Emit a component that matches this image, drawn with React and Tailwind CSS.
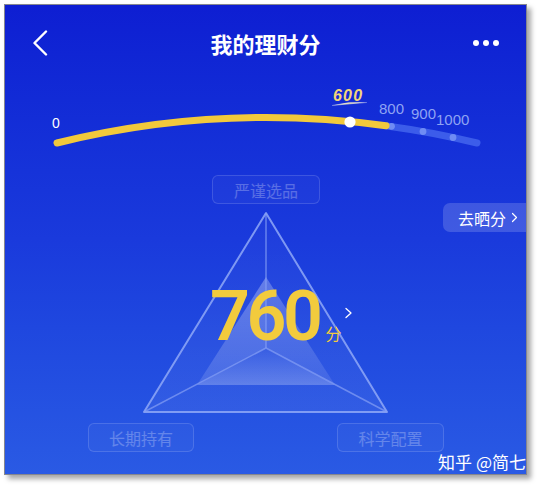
import React from "react";

const CJK = "font-['Noto_Sans_CJK_SC','Noto_Sans',sans-serif]";
const LATIN = "font-['Liberation_Sans',sans-serif]";

function Tag({ label, className = "" }) {
  return (
    <div
      className={`h-[29px] shrink-0 rounded-[6px] border border-white/[0.14] bg-white/[0.03] flex items-center justify-center text-[16px] leading-none text-white/[0.26] ${CJK} ${className}`}
    >
      {label}
    </div>
  );
}

function Gauge() {
  return (
    <section className="relative h-[89px] shrink-0">
      <svg
        className="absolute left-0 top-0"
        width="521"
        height="89"
        viewBox="0 76 521 89"
      >
        <defs>
          <linearGradient id="swoosh" x1="326" y1="0" x2="362" y2="0" gradientUnits="userSpaceOnUse">
            <stop offset="0" stopColor="#ffffff" stopOpacity="0.2" />
            <stop offset="0.5" stopColor="#e9e2c0" />
            <stop offset="1" stopColor="#ffffff" stopOpacity="0.2" />
          </linearGradient>
        </defs>
        {/* remaining range of the scale */}
        <path
          d="M382 121 A877 877 0 0 1 472 138"
          stroke="#4a6cf0"
          strokeOpacity="0.75"
          strokeWidth="7"
          fill="none"
          strokeLinecap="round"
        />
        <circle cx="386.5" cy="121.3" r="3.4" fill="#6f8cf4" />
        <circle cx="418" cy="126.5" r="3.4" fill="#6f8cf4" />
        <circle cx="448" cy="132.5" r="3.4" fill="#6f8cf4" />
        {/* reached part of the scale */}
        <path
          d="M52 138 A877 877 0 0 1 381 120.8"
          stroke="#f2c93b"
          strokeWidth="7"
          fill="none"
          strokeLinecap="round"
        />
        <circle cx="345" cy="117" r="5.6" fill="#ffffff" />
        {/* flourish under the current mark */}
        <path
          d="M327 100.5 Q344 96.5 362 97.5 Q344 98.6 327 100.5 Z"
          fill="url(#swoosh)"
          stroke="url(#swoosh)"
          strokeWidth="0.8"
        />
      </svg>

      {/* scale labels */}
      <span className={`absolute left-[47px] top-[35px] text-[14px] leading-none text-white ${LATIN}`}>
        0
      </span>
      <span className={`absolute left-[328px] top-[7px] text-[16px] leading-none tracking-[1.2px] italic font-bold text-[#f3d67a] ${LATIN}`}>
        600
      </span>
      <span className={`absolute left-[374px] top-[20px] text-[15px] leading-none text-[#8fa3f3] ${LATIN}`}>
        800
      </span>
      <span className={`absolute left-[406px] top-[25px] text-[15px] leading-none text-[#8fa3f3] ${LATIN}`}>
        900
      </span>
      <span className={`absolute left-[431px] top-[31px] text-[15px] leading-none text-[#8fa3f3] ${LATIN}`}>
        1000
      </span>
    </section>
  );
}

function Pyramid() {
  return (
    <div className="relative h-[219px] shrink-0">
      <svg
        className="absolute left-0 top-0"
        width="521"
        height="219"
        viewBox="0 199 521 219"
      >
        <defs>
          <linearGradient id="outerFill" x1="0" y1="208" x2="0" y2="407" gradientUnits="userSpaceOnUse">
            <stop offset="0" stopColor="#ffffff" stopOpacity="0.02" />
            <stop offset="1" stopColor="#ffffff" stopOpacity="0.06" />
          </linearGradient>
          <linearGradient id="faceLeft" x1="0" y1="272" x2="0" y2="380" gradientUnits="userSpaceOnUse">
            <stop offset="0" stopColor="#ffffff" stopOpacity="0.3" />
            <stop offset="1" stopColor="#ffffff" stopOpacity="0.12" />
          </linearGradient>
          <linearGradient id="faceRight" x1="0" y1="272" x2="0" y2="380" gradientUnits="userSpaceOnUse">
            <stop offset="0" stopColor="#ffffff" stopOpacity="0.26" />
            <stop offset="1" stopColor="#ffffff" stopOpacity="0.09" />
          </linearGradient>
          <linearGradient id="faceBottom" x1="0" y1="343" x2="0" y2="380" gradientUnits="userSpaceOnUse">
            <stop offset="0" stopColor="#ffffff" stopOpacity="0.06" />
            <stop offset="1" stopColor="#ffffff" stopOpacity="0.24" />
          </linearGradient>
        </defs>
        <polygon
          points="261,208 139,407 382,407"
          fill="url(#outerFill)"
          stroke="#8fa8f7"
          strokeOpacity="0.85"
          strokeWidth="2"
          strokeLinejoin="round"
        />
        <polygon points="261,272 261,343 192,380" fill="url(#faceLeft)" />
        <polygon points="261,272 330,380 261,343" fill="url(#faceRight)" />
        <polygon points="192,380 261,343 330,380" fill="url(#faceBottom)" />
        <g stroke="#86a0f5" strokeOpacity="0.7" strokeWidth="1.5">
          <line x1="261" y1="343" x2="261" y2="208" />
          <line x1="261" y1="343" x2="139" y2="407" />
          <line x1="261" y1="343" x2="382" y2="407" />
        </g>
      </svg>

      {/* total score over the pyramid */}
      <div className="absolute left-[205px] top-[77px] flex items-baseline text-[#f2cb3d]">
        <span className="text-[70px] leading-none font-semibold tracking-[-3.5px] font-['Roboto',sans-serif]">
          760
        </span>
        <span className={`ml-[6px] text-[16px] leading-none ${CJK}`}>分</span>
        <svg className="ml-[2px] self-start mt-[26px]" width="9" height="12" viewBox="0 0 9 12">
          <path d="M2 1.5 L7 6 L2 10.5" stroke="#ffffff" strokeWidth="1.3" fill="none" strokeLinecap="round" strokeLinejoin="round" />
        </svg>
      </div>
    </div>
  );
}

function Radar() {
  return (
    <section className="flex-1 flex flex-col pt-[5px]">
      <Tag label="严谨选品" className="w-[108px] ml-[207px]" />
      <Pyramid />
      <div className="flex gap-[143px] pl-[83px]">
        <Tag label="长期持有" className="w-[106px]" />
        <Tag label="科学配置" className="w-[107px]" />
      </div>
    </section>
  );
}

export default function App() {
  return (
    <div className="w-[541px] h-[488px] bg-white pl-[4px] pt-[4px]">
      <div className="relative w-[523px] h-[471px] border border-[#85868f] shadow-[4px_4px_5px_rgba(0,0,0,0.35)] bg-linear-to-b from-[#0e1ed2] via-[#1a3adc] to-[#2a5ae4] overflow-hidden flex flex-col">
        <header className="h-[76px] shrink-0 grid grid-cols-[1fr_auto_1fr] items-center pl-[27px] pr-[27px]">
          <svg width="16" height="26" viewBox="0 0 16 26">
            <path
              d="M14 1.5 L2.5 13 L14 24.5"
              stroke="#ffffff"
              strokeWidth="2.4"
              fill="none"
              strokeLinecap="round"
              strokeLinejoin="round"
            />
          </svg>
          <h1 className={`text-[22px] leading-none font-bold text-white ${CJK}`}>
            我的理财分
          </h1>
          <div className="flex justify-end gap-[4px]">
            <span className="w-[6px] h-[6px] rounded-full bg-white" />
            <span className="w-[6px] h-[6px] rounded-full bg-white" />
            <span className="w-[6px] h-[6px] rounded-full bg-white" />
          </div>
        </header>

        <Gauge />
        <Radar />

        {/* share button pinned to the right edge */}
        <button
          className={`absolute right-0 top-[198px] h-[29px] w-[83px] rounded-l-[7px] bg-white/[0.17] flex items-center pl-[15px] text-[16px] leading-none text-white ${CJK}`}
        >
          去晒分
          <svg className="ml-[5px]" width="7" height="11" viewBox="0 0 7 11">
            <path d="M1.5 1.5 L5.5 5.5 L1.5 9.5" stroke="#ffffff" strokeWidth="1.2" fill="none" strokeLinecap="round" strokeLinejoin="round" />
          </svg>
        </button>

        <span className={`absolute right-0 bottom-[4px] text-[17px] leading-none text-white ${CJK}`}>
          知乎 @简七
        </span>
      </div>
    </div>
  );
}
